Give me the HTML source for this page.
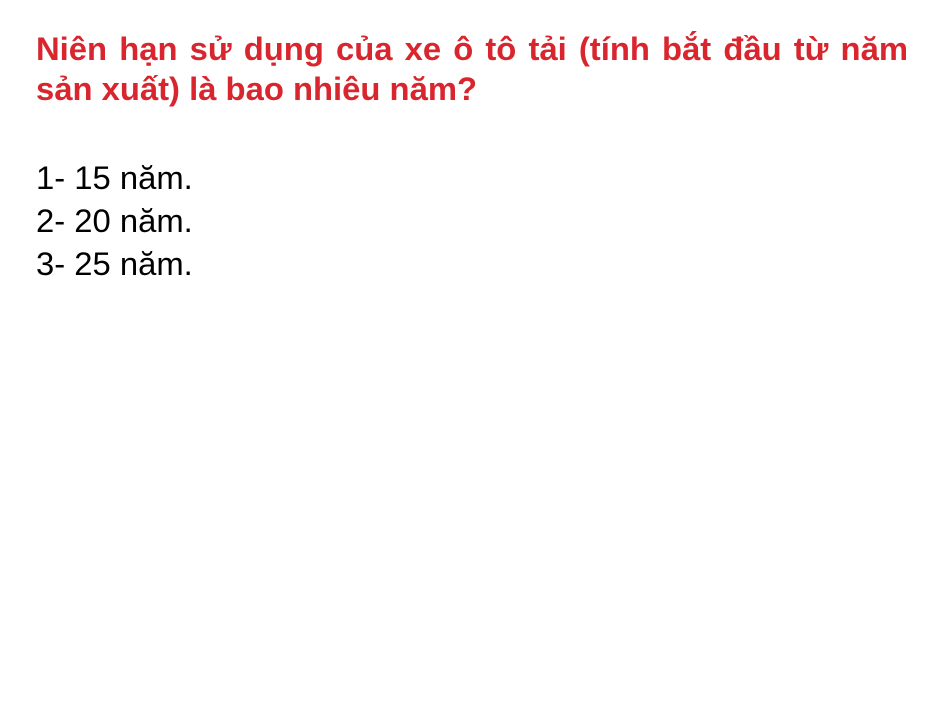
<!DOCTYPE html>
<html><head><meta charset="utf-8"><style>
body{margin:0;width:945px;height:709px;background:#fff;overflow:hidden;font-family:"Liberation Sans",Arial,sans-serif}
.q{position:absolute;left:36px;top:29px;width:872px;color:#d9262e;font-weight:bold;font-size:32.8px;line-height:40px}
.l1{text-align:justify;text-align-last:justify;white-space:nowrap}
.a{position:absolute;left:36px;top:156px;font-size:32.8px;line-height:43px;color:#000}
</style></head><body>
<div class="q"><div class="l1">Niên hạn sử dụng của xe ô tô tải (tính bắt đầu từ năm</div><div>sản xuất) là bao nhiêu năm?</div></div>
<div class="a">1- 15 năm.<br>2- 20 năm.<br>3- 25 năm.</div>
</body></html>
